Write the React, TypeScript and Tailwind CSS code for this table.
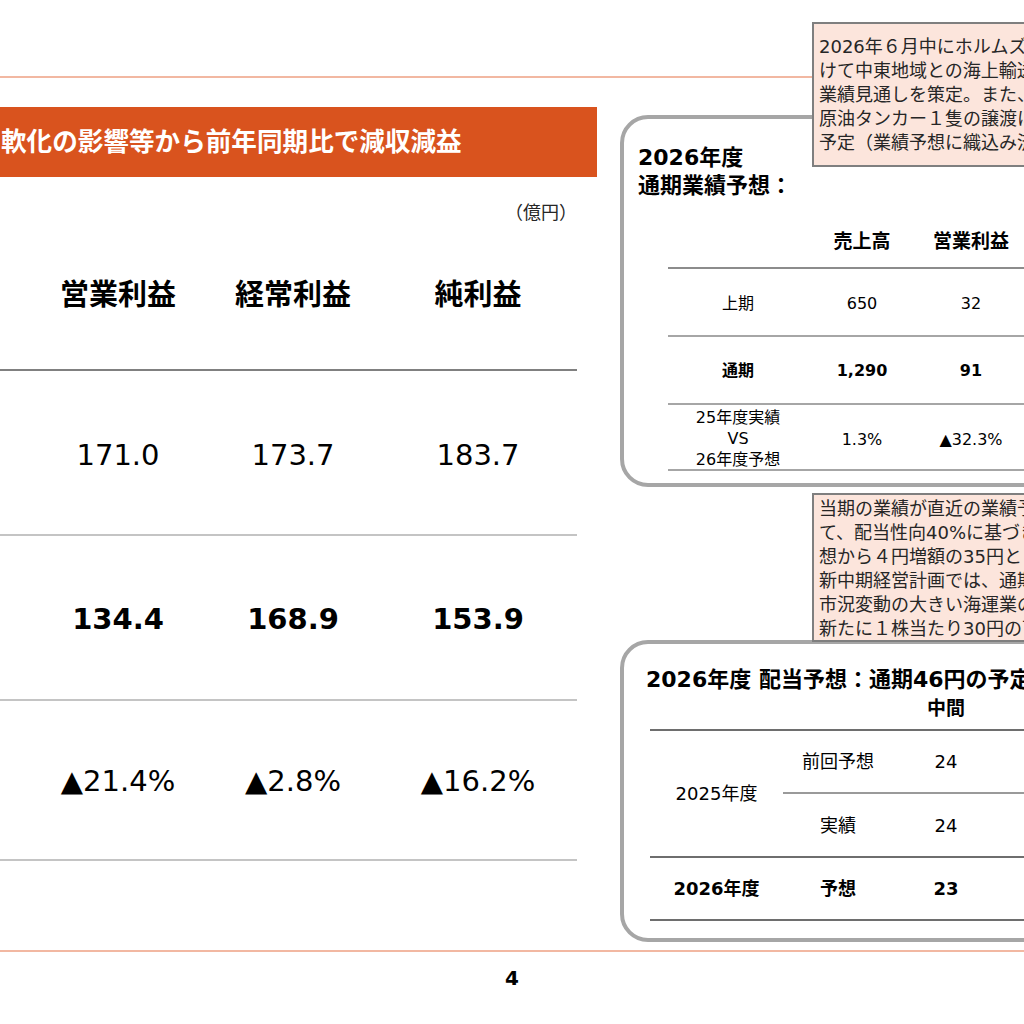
const summary = [
  { label: "上期", sales: "650", op: "32", ord: "31", net: "22" },
  { label: "通期", sales: "1,290", op: "91", ord: "94", net: "65", bold: true },
];

function LeftTable() {
  return (
    <div className="w-[597px] shrink-0">
      <div className="mt-[29px] flex h-[70px] items-center bg-[#d9531e] pl-[1px]">
        <span className="whitespace-nowrap text-[25.6px] font-bold text-white">
          軟化の影響等から前年同期比で減収減益
        </span>
      </div>
      <div className="mt-[24px] flex h-[22px] items-center justify-end pr-[20px] text-[18px] text-[#262626]">
        （億円）
      </div>
      <div className="w-[577px]">
        <div className="grid h-[148px] grid-cols-[176px_174px_196px] items-center border-b-2 border-[#808080] pl-[30px] text-[29px] font-bold">
          <div className="text-center">営業利益</div>
          <div className="text-center">経常利益</div>
          <div className="text-center">純利益</div>
        </div>
        <div className="grid h-[165px] grid-cols-[176px_174px_196px] items-center border-b-2 border-[#c4c4c4] pl-[30px] pt-[6px] text-[29px]">
          <div className="text-center">171.0</div>
          <div className="text-center">173.7</div>
          <div className="text-center">183.7</div>
        </div>
        <div className="grid h-[165px] grid-cols-[176px_174px_196px] items-center border-b-2 border-[#c4c4c4] pl-[30px] pt-[4px] text-[29px] font-bold">
          <div className="text-center">134.4</div>
          <div className="text-center">168.9</div>
          <div className="text-center">153.9</div>
        </div>
        <div className="grid h-[160px] grid-cols-[176px_174px_196px] items-center border-b-2 border-[#c4c4c4] pl-[30px] pt-[4px] text-[29px]">
          <div className="text-center">▲21.4%</div>
          <div className="text-center">▲2.8%</div>
          <div className="text-center">▲16.2%</div>
        </div>
      </div>
    </div>
  );
}

function ForecastBox() {
  return (
    <div className="h-[372px] w-[470px] rounded-[28px] border-4 border-[#a6a6a6] pl-[14px] pt-[25px]">
      <div className="text-[22px] font-bold leading-[28px]">
        <div>2026年度</div>
        <div>通期業績予想：</div>
      </div>
      <div className="mt-[16px] pl-[30px]">
        <div className="grid h-[53px] grid-cols-[140px_108px_110px_110px] items-center border-b-2 border-[#8c8c8c] text-[19px] font-bold">
          <div />
          <div className="text-center">売上高</div>
          <div className="text-center">営業利益</div>
          <div className="text-center">経常利益</div>
        </div>
        {summary.map((r) => (
          <div
            key={r.label}
            className={
              r.bold
                ? "grid h-[68px] grid-cols-[140px_108px_110px_110px] items-center border-b-2 border-[#a6a6a6] pt-[2px] text-[16px] font-bold"
                : "grid h-[68px] grid-cols-[140px_108px_110px_110px] items-center border-b-2 border-[#a6a6a6] pt-[3px] text-[16px]"
            }
          >
            <div className="text-center">{r.label}</div>
            <div className="text-center">{r.sales}</div>
            <div className="text-center">{r.op}</div>
            <div className="text-center">{r.ord}</div>
          </div>
        ))}
        <div className="grid h-[66px] grid-cols-[140px_108px_110px_110px] items-center border-b-2 border-[#a6a6a6] text-[16px]">
          <div className="pt-[2px] text-center leading-[21px]">
            <div>25年度実績</div>
            <div>VS</div>
            <div>26年度予想</div>
          </div>
          <div className="pt-[4px] text-center">1.3%</div>
          <div className="pt-[4px] text-center">▲32.3%</div>
          <div className="pt-[4px] text-center">▲29.8%</div>
        </div>
      </div>
    </div>
  );
}

function DividendBox() {
  return (
    <div className="mt-[153px] h-[302px] w-[470px] rounded-[28px] border-4 border-[#a6a6a6] pt-[22px]">
      <div className="whitespace-nowrap pl-[22px] text-[22px] font-bold leading-[28px]">
        2026年度 配当予想：通期46円の予定
      </div>
      <div className="pl-[26px] text-[18px]">
        <div className="grid h-[37px] grid-cols-[133px_110px_106px_110px] border-b-2 border-[#6e6e6e] text-[19px] font-bold leading-[28px]">
          <div />
          <div />
          <div className="text-center">中間</div>
          <div className="text-center">期末</div>
        </div>
        <div className="flex">
          <div className="flex w-[133px] shrink-0 items-center justify-center border-b-2 border-[#6e6e6e]">
            2025年度
          </div>
          <div className="w-[326px] shrink-0">
            <div className="grid h-[63px] grid-cols-[110px_106px_110px] items-center border-b-2 border-[#9a9a9a]">
              <div className="text-center">前回予想</div>
              <div className="text-center">24</div>
              <div className="text-center">31</div>
            </div>
            <div className="grid h-[64px] grid-cols-[110px_106px_110px] items-center border-b-2 border-[#6e6e6e]">
              <div className="text-center">実績</div>
              <div className="text-center">24</div>
              <div className="text-center">35</div>
            </div>
          </div>
        </div>
        <div className="grid h-[63px] grid-cols-[133px_110px_106px_110px] items-center border-b-2 border-[#6e6e6e] font-bold">
          <div className="text-center">2026年度</div>
          <div className="text-center">予想</div>
          <div className="text-center">23</div>
          <div className="text-center">23</div>
        </div>
      </div>
    </div>
  );
}

function Callouts() {
  return (
    <>
      <div className="absolute left-[812px] top-[22px] h-[145px] w-[420px] whitespace-nowrap border-2 border-[#7f7f7f] bg-[#fce5dc] pl-[5px] pt-[11px] text-[18px] leading-[24px] text-[#262626]">
        <div>2026年６月中にホルムズ海峡の通航が再開されることを前提に、</div>
        <div>けて中東地域との海上輸送が段階的に正常化する想定で</div>
        <div>業績見通しを策定。また、</div>
        <div>原油タンカー１隻の譲渡に伴う売却益を計上する</div>
        <div>予定（業績予想に織込み済）。</div>
      </div>
      <div className="absolute left-[812px] top-[493px] h-[149px] w-[420px] whitespace-nowrap border-2 border-[#7f7f7f] bg-[#fce5dc] pl-[5px] pt-[2px] text-[18px] leading-[24px] text-[#262626]">
        <div>当期の業績が直近の業績予想を上回ったことを受け</div>
        <div>て、配当性向40%に基づき期末配当を前回予</div>
        <div>想から４円増額の35円としました。</div>
        <div>新中期経営計画では、通期の配当性向を</div>
        <div>市況変動の大きい海運業の特性を踏まえ、</div>
        <div>新たに１株当たり30円の下限配当を設定。</div>
      </div>
    </>
  );
}

export default function App() {
  return (
    <div className="relative h-[1024px] w-[1024px] overflow-hidden bg-white font-['DejaVu_Sans','Noto_Sans_CJK_JP',sans-serif] text-black">
      <div className="h-[78px] border-b-2 border-[#f2b8a2]" />
      <div className="flex h-[872px]">
        <LeftTable />
        <div className="ml-[23px] pt-[37px]">
          <ForecastBox />
          <DividendBox />
        </div>
      </div>
      <div className="h-[2px] bg-[#f2b8a2]" />
      <div className="flex h-[72px] justify-center pt-[16px] text-[20px] font-bold leading-[20px]">
        4
      </div>
      <Callouts />
    </div>
  );
}
